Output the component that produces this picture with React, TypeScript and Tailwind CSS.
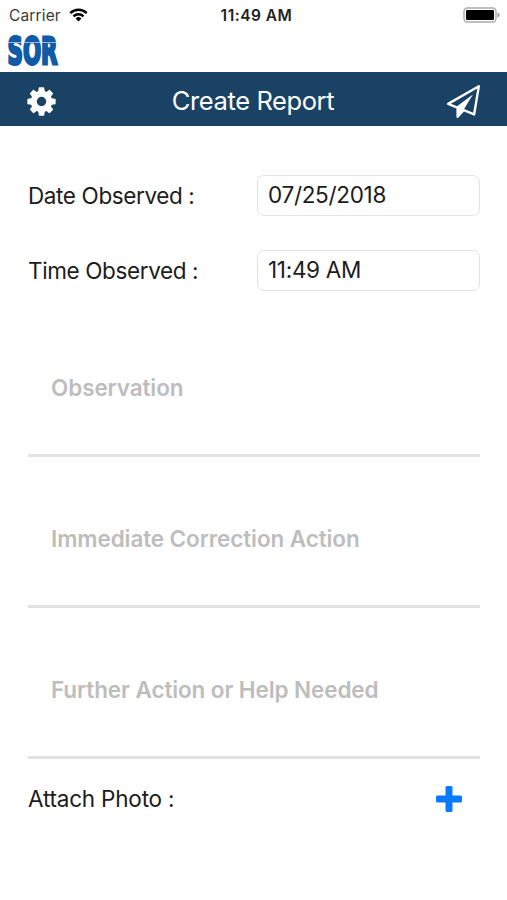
import React from 'react';

interface FieldRowProps {
  label: string;
  value: string;
}

function FieldRow({ label, value }: FieldRowProps) {
  return (
    <div className="flex h-[41px] items-center justify-between">
      <span className="pt-px text-[22.5px] leading-none tracking-[-0.38px] text-[#1c1c1c]">{label}</span>
      <div className="flex h-[41px] w-[223px] items-center rounded-[7px] border border-[#e2e2e2] px-[10px] pb-px text-[22.5px] leading-none tracking-[-0.3px] text-[#1c1c1c]">
        {value}
      </div>
    </div>
  );
}

function NoteField({ placeholder }: { placeholder: string }) {
  return (
    <div className="h-[151px] border-b-[3px] border-[#e2e2e2] pt-[67px] pl-[23px]">
      <div className="text-[22.5px] leading-[30px] font-semibold tracking-[-0.1px] whitespace-nowrap text-[#bdbdbd]">{placeholder}</div>
    </div>
  );
}

function StatusBar() {
  return (
    <div className="grid h-[30px] grid-cols-3 items-center pr-[7px] pl-[9px] text-[15.5px] leading-none">
      <div className="flex items-center gap-2 text-[#3a3a3a]">
        <span className="pt-px tracking-[0.15px]">Carrier</span>
        <svg width="19" height="14" viewBox="0 0 20 15" fill="none" stroke="#000" strokeWidth="2.6">
          <path d="M1.2 5.4a12.6 12.6 0 0 1 17.6 0" />
          <path d="M4.6 8.9a7.8 7.8 0 0 1 10.8 0" />
          <path d="M10 14.4 6.9 11.3a4.4 4.4 0 0 1 6.2 0z" fill="#000" stroke="none" />
        </svg>
      </div>
      <div className="pt-px pl-1 text-center font-semibold tracking-[0.5px] text-[#222]">11:49 AM</div>
      <div className="flex justify-end">
        <svg width="37" height="17" viewBox="0 0 37 17">
          <rect x="1" y="1" width="32" height="14" rx="3.5" fill="#fff" stroke="#aaa" strokeWidth="1.4" />
          <rect x="3" y="3" width="28" height="10" rx="1" fill="#000" />
          <path d="M34.5 5.500v5c1.600-.5 2-1.500 2-2.500s-.4-2-2-2.500z" fill="#999" />
        </svg>
      </div>
    </div>
  );
}

function Logo() {
  return (
    <svg width="54" height="42" viewBox="0 0 54 42" className="block overflow-visible">
      <text
        x="2.500"
        y="34"
        textLength="50"
        lengthAdjust="spacingAndGlyphs"
        fontFamily="DejaVu Sans, sans-serif"
        fontWeight="700"
        fontSize="37.500"
        fill="#0f5ba7"
        stroke="#0f5ba7"
        strokeWidth="3"
      >
        SOR
      </text>
      <path d="M0 12.500h54" stroke="#fff" strokeWidth="0.8" opacity="0.7" />
    </svg>
  );
}

function GearIcon() {
  return (
    <svg width="33" height="33" viewBox="0 0 1792 1792" fill="currentColor">
      <path d="M1152 896q0-106-75-181t-181-75-181 75-75 181 75 181 181 75 181-75 75-181zm512-109v222q0 12-8 23t-20 13l-185 28q-19 54-39 91 35 50 107 138 10 12 10 25t-9 23q-27 37-99 108t-94 71q-12 0-26-9l-138-108q-44 23-91 38-16 136-29 186-7 28-36 28h-222q-14 0-24.500-8.500t-11.500-21.500l-28-184q-49-16-90-37l-141 107q-10 9-25 9-14 0-25-11-126-114-165-168-7-10-7-23 0-12 8-23 15-21 51-66.500t54-70.500q-27-50-41-99l-183-27q-13-2-21-12.500t-8-23.500v-222q0-12 8-23t19-13l186-28q14-46 39-92-40-57-107-138-10-12-10-24 0-10 9-23 26-36 98.500-107.500t94.500-71.500q13 0 26 10l138 107q44-23 91-38 16-136 29-186 7-28 36-28h222q14 0 24.500 8.500t11.500 21.500l28 184q49 16 90 37l142-107q9-9 24-9 13 0 25 10 129 119 165 170 7 8 7 22 0 12-8 23-15 21-51 66.500t-54 70.500q26 50 41 98l183 28q13 2 21 12.500t8 23.500z" />
    </svg>
  );
}

function SendIcon() {
  return (
    <svg width="33" height="33" viewBox="0 0 1792 1792" fill="currentColor">
      <path d="M1764 11q33 24 27 64l-256 1536q-5 29-32 45-14 8-31 8-11 0-24-5l-527-215-298 327q-18 21-47 21-14 0-23-4-19-7-30-23.500t-11-36.500v-452l-472-193q-37-14-40-55-3-39 32-59l1664-960q35-21 68 2zm-342 1499l221-1323-1434 827 336 137 863-639-478 797z" />
    </svg>
  );
}

function PlusIcon() {
  return (
    <svg width="26" height="26" viewBox="0 0 26 26" fill="#087afc">
      <rect x="0" y="9.500" width="26" height="7" rx="1.600" />
      <rect x="9.500" y="0" width="7" height="26" rx="1.600" />
    </svg>
  );
}

export default function App() {
  return (
    <div className="h-[900px] w-[507px] overflow-hidden bg-white font-['Inter',sans-serif]">
      <StatusBar />
      <div className="h-[42px] pl-[5px]">
        <Logo />
      </div>

      <header className="flex h-[54px] items-center justify-between bg-[#1a4265] pt-[5px] pr-[27px] pl-[25px] text-white">
        <GearIcon />
        <h1 className="pb-[2px] pl-px text-[25.5px] leading-none tracking-[-0.4px]">Create Report</h1>
        <SendIcon />
      </header>

      <main className="pt-[49px] pr-[27px] pl-[28px]">
        <div className="space-y-[34px]">
          <FieldRow label="Date Observed :" value="07/25/2018" />
          <FieldRow label="Time Observed :" value="11:49 AM" />
        </div>

        <div className="pt-[15px]">
          <NoteField placeholder="Observation" />
          <NoteField placeholder="Immediate Correction Action" />
          <NoteField placeholder="Further Action or Help Needed" />
        </div>

        <div className="flex h-[80px] items-center justify-between pr-[18px]">
          <span className="text-[22.5px] leading-none tracking-[-0.2px] text-[#1c1c1c]">Attach Photo :</span>
          <PlusIcon />
        </div>
      </main>
    </div>
  );
}
